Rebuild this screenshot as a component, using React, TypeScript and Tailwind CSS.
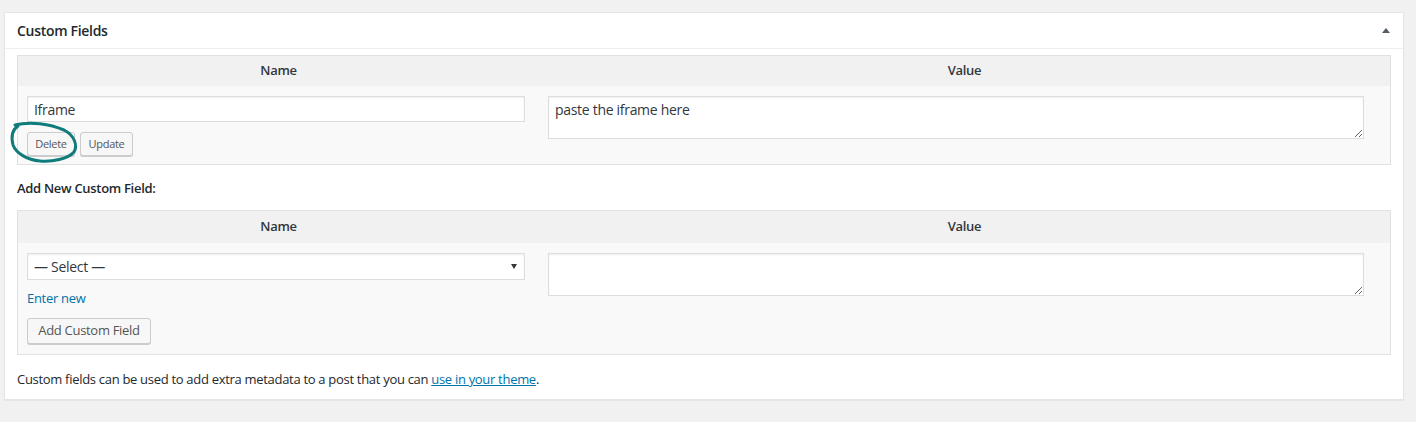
const font = "font-['Open_Sans','Noto_Sans',sans-serif]";

const ColumnHead = ({ h }: { h: string }) => (
  <div className={`grid grid-cols-[521px_1fr] bg-[#f1f1f1] ${h} items-center text-center text-[13px] font-semibold text-[#32373c]`}>
    <div>Name</div>
    <div>Value</div>
  </div>
);

const SmallButton = ({ label, w }: { label: string; w: string }) => (
  <button
    type="button"
    className={`${w} h-[24px] rounded-[3px] border border-[#cccccc] bg-[#f7f7f7] text-[11px] leading-[22px] text-[#555555] shadow-[0_1px_0_#cccccc]`}
  >
    {label}
  </button>
);

export default function App() {
  return (
    <div className={`relative h-[422px] w-full bg-[#f1f1f1] pl-[4px] pt-[12px] ${font} text-[13px] tracking-[-0.3px] text-[#23282d]`}>
      <div className="w-[1400px] border border-[#e5e5e5] bg-white shadow-[0_1px_1px_rgba(0,0,0,0.04)]">
        {/* header */}
        <div className="flex h-[36px] items-center justify-between border-b border-[#eeeeee] pl-[12px] pr-[13px]">
          <h2 className="text-[14px] font-semibold leading-none">Custom Fields</h2>
          <svg width="8" height="5" viewBox="0 0 8 5">
            <path d="M0 5 L4 0 L8 5 Z" fill="#555d66" />
          </svg>
        </div>

        <div className="px-[12px] pb-[10px]">
          {/* existing fields */}
          <div className="mt-[6px] border border-[#e1e1e1] bg-[#f9f9f9]">
            <ColumnHead h="h-[30px]" />
            <div className="grid grid-cols-[521px_1fr]">
              <div className="pl-[9px] pt-[10px] pb-[8px]">
                <input
                  defaultValue="Iframe"
                  className="block h-[26px] w-[498px] border border-[#dddddd] bg-white px-[6px] text-[14px] text-[#32373c] shadow-[inset_0_1px_2px_rgba(0,0,0,0.07)] outline-none"
                />
                <div className="mt-[10px] flex gap-[5px]">
                  <SmallButton label="Delete" w="w-[48px]" />
                  <SmallButton label="Update" w="w-[53px]" />
                </div>
              </div>
              <div className="pl-[9px] pt-[10px]">
                <textarea
                  defaultValue="paste the iframe here"
                  className="block h-[43px] w-[816px] border border-[#dddddd] bg-white px-[6px] py-[3px] text-[14px] leading-[20px] text-[#32373c] shadow-[inset_0_1px_2px_rgba(0,0,0,0.07)] outline-none"
                />
              </div>
            </div>
          </div>

          <p className="mt-[13px] text-[13px] font-semibold leading-[20px]">Add New Custom Field:</p>

          {/* new field */}
          <div className="mt-[12px] border border-[#e1e1e1] bg-[#f9f9f9]">
            <ColumnHead h="h-[32px]" />
            <div className="grid grid-cols-[521px_1fr]">
              <div className="pl-[9px] pt-[10px] pb-[10px]">
                <div className="flex h-[27px] w-[498px] items-center justify-between border border-[#dddddd] bg-white pl-[6px] pr-[7px] text-[14px] text-[#32373c] shadow-[inset_0_1px_2px_rgba(0,0,0,0.07)]">
                  <span>— Select —</span>
                  <svg width="6" height="5" viewBox="0 0 6 5">
                    <path d="M0 0 L6 0 L3 5 Z" fill="#32373c" />
                  </svg>
                </div>
                <a href="#" className="mt-[8px] block leading-[20px] text-[#0073aa]">
                  Enter new
                </a>
                <button
                  type="button"
                  className="mt-[10px] block h-[26px] w-[124px] rounded-[3px] border border-[#cccccc] bg-[#f7f7f7] text-[13px] text-[#555555] shadow-[0_1px_0_#cccccc]"
                >
                  Add Custom Field
                </button>
              </div>
              <div className="pl-[9px] pt-[10px]">
                <textarea className="block h-[43px] w-[816px] border border-[#dddddd] bg-white px-[6px] py-[3px] text-[14px] shadow-[inset_0_1px_2px_rgba(0,0,0,0.07)] outline-none" />
              </div>
            </div>
          </div>

          <p className="mt-[14px] leading-[20px]">
            Custom fields can be used to add extra metadata to a post that you can{' '}
            <a href="#" className="text-[#0073aa] underline">
              use in your theme
            </a>
            .
          </p>
        </div>
      </div>

      {/* hand drawn mark around Delete */}
      <svg className="pointer-events-none absolute left-0 top-0" width="100" height="180" viewBox="0 0 100 180">
        <path
          d="M15 125 C 30 121, 50 124, 64 130 C 74 135, 78 145, 74 152 C 68 159, 52 162, 40 161 C 27 160, 16 153, 13 145 C 11 137, 12 130, 18 126"
          fill="none"
          stroke="#0e7c7b"
          strokeWidth="3"
          strokeLinecap="round"
        />
      </svg>
    </div>
  );
}
